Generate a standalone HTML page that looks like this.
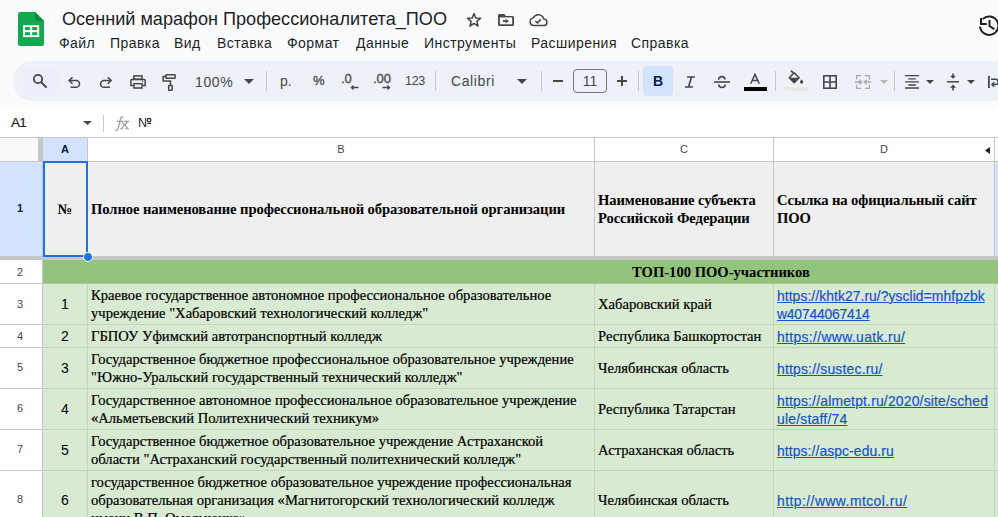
<!DOCTYPE html>
<html><head><meta charset="utf-8">
<style>
*{margin:0;padding:0;box-sizing:border-box}
html,body{width:998px;height:517px;overflow:hidden;background:#fff;font-family:"Liberation Sans",sans-serif;position:relative}
.a{position:absolute}
#hdr{left:0;top:0;width:998px;height:108px;background:#f9fbfd}
#title{left:62px;top:9px;font-size:18.1px;color:#1f1f1f;white-space:nowrap}
.menu{top:34.5px;font-size:14px;letter-spacing:0.45px;color:#1f1f1f;white-space:nowrap}
#pill{left:13px;top:61px;width:1000px;height:40px;background:#eef2f8;border-radius:20px}
.tb{position:absolute;font-size:14px;color:#444746;white-space:nowrap;line-height:16px}
.sep{position:absolute;width:1px;height:20px;background:#c7c7c7;top:71px}
.ic{position:absolute;overflow:visible}
#fbar{left:0;top:108px;width:998px;height:30px;background:#fff;border-bottom:1px solid #c7c7c7}
.cell{position:absolute;font-family:"Liberation Serif",serif;font-size:14.6px;color:#000;line-height:18px;white-space:nowrap;-webkit-text-stroke:0.2px #000}
.b{font-weight:bold;-webkit-text-stroke:0}
.num{position:absolute;font-family:"Liberation Sans",sans-serif;font-size:14px;color:#000;line-height:16px;text-align:center;width:44px;left:43px}
.lnk{position:absolute;font-family:"Liberation Sans",sans-serif;font-size:13.9px;color:#1155cc;line-height:17.6px;text-decoration:underline;-webkit-text-stroke:0.2px #1155cc;white-space:nowrap;left:777px}
.rh{position:absolute;left:-1px;width:42px;text-align:center;font-size:11px;color:#444746;line-height:12px}
.ch{position:absolute;top:143px;font-size:11px;color:#444746;line-height:12px;text-align:center}
.hl{position:absolute;height:1px}
.vl{position:absolute;width:1px}
</style></head><body>
<div id="hdr" class="a"></div>
<!-- logo -->
<svg class="a" style="left:18px;top:12px" width="26" height="34" viewBox="0 0 26 34">
<path d="M2 0h15l9 9v23a2 2 0 0 1-2 2H2a2 2 0 0 1-2-2V2a2 2 0 0 1 2-2z" fill="#11a84f"/>
<path d="M17 0l9 9h-7a2 2 0 0 1-2-2z" fill="#0b8a3c"/>
<rect x="5" y="13.2" width="16.2" height="11.9" fill="#fff"/>
<rect x="7" y="15.1" width="5" height="3" fill="#11a84f"/><rect x="14.2" y="15.1" width="5" height="3" fill="#11a84f"/>
<rect x="7" y="20.2" width="5" height="3" fill="#11a84f"/><rect x="14.2" y="20.2" width="5" height="3" fill="#11a84f"/>
</svg>
<div id="title" class="a">Осенний марафон Профессионалитета_ПОО</div>
<!-- star -->
<svg class="ic" style="left:466px;top:12px" width="16" height="16" viewBox="0 0 16 16"><path d="M8 1.6l1.75 4.45 4.75.3-3.67 3.03 1.2 4.62L8 11.4 3.97 14l1.2-4.62L1.5 6.35l4.75-.3z" fill="none" stroke="#444746" stroke-width="1.5" stroke-linejoin="round"/></svg>
<!-- folder move -->
<svg class="ic" style="left:498px;top:14px" width="16" height="12" viewBox="0 0 16 12"><path d="M1.5 0H6.3L8 2h6.5A1.5 1.5 0 0 1 16 3.5v7A1.5 1.5 0 0 1 14.5 12h-13A1.5 1.5 0 0 1 0 10.5v-9A1.5 1.5 0 0 1 1.5 0z" fill="#444746"/><rect x="1.8" y="3.4" width="12.4" height="6.9" fill="#f9fbfd"/><rect x="5" y="6.1" width="2.7" height="1.9" fill="#444746"/><path d="M7.6 4.7L10.9 7 7.6 9.4z" fill="#444746"/></svg>
<!-- cloud check -->
<svg class="ic" style="left:528.5px;top:13.2px" width="18.6" height="14" viewBox="0 0 20 15"><path d="M5 13.5h10.5a3.6 3.6 0 0 0 .3-7.2A6 6 0 0 0 4.6 5.2 4.2 4.2 0 0 0 5 13.5z" fill="none" stroke="#444746" stroke-width="1.6" stroke-linejoin="round"/><path d="M7 8.6l2 2 3.8-3.8" fill="none" stroke="#444746" stroke-width="1.6"/></svg>
<!-- history -->
<svg class="ic" style="left:978px;top:15px" width="22" height="22" viewBox="0 0 22 22"><path d="M2 11.6A9.2 9.2 0 1 0 4.7 4.1" fill="none" stroke="#1f1f1f" stroke-width="2"/><path d="M3 3v6h5.8" fill="none" stroke="#1f1f1f" stroke-width="2"/><path d="M11.5 5v6l4.8 3.2" fill="none" stroke="#1f1f1f" stroke-width="2"/></svg>

<div class="a menu" style="left:59px">Файл</div>
<div class="a menu" style="left:110px">Правка</div>
<div class="a menu" style="left:174px">Вид</div>
<div class="a menu" style="left:217px">Вставка</div>
<div class="a menu" style="left:287px">Формат</div>
<div class="a menu" style="left:356px">Данные</div>
<div class="a menu" style="left:424px">Инструменты</div>
<div class="a menu" style="left:531px">Расширения</div>
<div class="a menu" style="left:631px">Справка</div>

<div id="pill" class="a"></div>
<div class="a" style="left:22px;top:67px;width:37px;height:28px;background:#eaeff9"></div>
<!-- search -->
<svg class="ic" style="left:31px;top:72px" width="18" height="18" viewBox="0 0 18 18"><circle cx="7" cy="7" r="4.2" fill="none" stroke="#444746" stroke-width="1.8"/><path d="M10 10l5.6 5.6" stroke="#444746" stroke-width="1.9"/></svg>
<!-- undo -->
<svg class="ic" style="left:68px;top:76px" width="14" height="13" viewBox="0 0 14 13"><path d="M1.5 4.5h6.6a3.4 3.4 0 0 1 0 6.8H2.6" fill="none" stroke="#444746" stroke-width="1.6"/><path d="M4.5 1.2L1.2 4.5l3.3 3.3" fill="none" stroke="#444746" stroke-width="1.6"/></svg>
<!-- redo -->
<svg class="ic" style="left:99px;top:76px" width="14" height="13" viewBox="0 0 14 13"><path d="M11.8 4.5H5a3.4 3.4 0 0 0 0 6.8h6" fill="none" stroke="#444746" stroke-width="1.6"/><path d="M8.8 1.2l3.3 3.3-3.3 3.3" fill="none" stroke="#444746" stroke-width="1.6"/></svg>
<!-- print -->
<svg class="ic" style="left:130px;top:75px" width="17" height="15" viewBox="0 0 17 15"><rect x="3.9" y=".9" width="8.1" height="3.4" fill="none" stroke="#444746" stroke-width="1.5"/><path d="M3.2 10.4H.9V5.4a1 1 0 0 1 1-1h12.3a1 1 0 0 1 1 1v5H12.7" fill="none" stroke="#444746" stroke-width="1.5"/><rect x="3.9" y="8.7" width="8.1" height="4.3" fill="none" stroke="#444746" stroke-width="1.5"/><circle cx="12.5" cy="6.3" r=".7" fill="#444746"/></svg>
<!-- paint format -->
<svg class="ic" style="left:161px;top:73px" width="16" height="19" viewBox="0 0 16 19"><rect x="4.95" y="1.75" width="9.2" height="3.5" rx=".6" fill="none" stroke="#444746" stroke-width="1.5"/><path d="M4.95 3.5H2.15v4.45h7.3V12.6" fill="none" stroke="#444746" stroke-width="1.5"/><rect x="7.7" y="12.6" width="3.5" height="4.6" rx=".5" fill="none" stroke="#444746" stroke-width="1.5"/></svg>
<div class="tb" style="left:195px;top:74px;letter-spacing:0.6px">100%</div>
<svg class="ic" style="left:244px;top:79px" width="10" height="5" viewBox="0 0 10 5"><path d="M0 0h10L5 5z" fill="#444746"/></svg>
<div class="sep" style="left:266px"></div>
<div class="tb" style="left:280px;top:73px">р.</div>
<div class="tb" style="left:313px;top:73px;font-size:13px;-webkit-text-stroke:0.3px #444746">%</div>
<div class="tb" style="left:341px;top:71px;font-size:13px;-webkit-text-stroke:0.3px #444746">.0</div>
<svg class="ic" style="left:350px;top:85px" width="9" height="5" viewBox="0 0 9 5"><path d="M8.5 2.5H1.5M3.5 .5l-2 2 2 2" fill="none" stroke="#444746" stroke-width="1.4"/></svg>
<div class="tb" style="left:373px;top:71px;font-size:13px;-webkit-text-stroke:0.3px #444746">.00</div>
<svg class="ic" style="left:382px;top:85px" width="9" height="5" viewBox="0 0 9 5"><path d="M.5 2.5h7M5.5 .5l2 2-2 2" fill="none" stroke="#444746" stroke-width="1.4"/></svg>
<div class="tb" style="left:405px;top:73px;font-size:12.5px;letter-spacing:-0.3px">123</div>
<div class="sep" style="left:435px"></div>
<div class="tb" style="left:451px;top:73px;letter-spacing:0.6px">Calibri</div>
<svg class="ic" style="left:517px;top:79px" width="10" height="5" viewBox="0 0 10 5"><path d="M0 0h10L5 5z" fill="#444746"/></svg>
<div class="sep" style="left:541px"></div>
<div class="a" style="left:553px;top:80px;width:10px;height:2px;background:#444746"></div>
<div class="a" style="left:573px;top:69px;width:34px;height:24px;border:1px solid #747775;border-radius:4px"></div>
<div class="tb" style="left:573px;top:73px;width:34px;text-align:center">11</div>
<div class="a" style="left:617px;top:80px;width:10px;height:2px;background:#444746"></div>
<div class="a" style="left:621px;top:76px;width:2px;height:10px;background:#444746"></div>
<div class="sep" style="left:638px"></div>
<div class="a" style="left:643px;top:66px;width:30px;height:30px;background:#d3e3fd;border-radius:4px"></div>
<div class="tb" style="left:643px;top:73px;width:30px;text-align:center;font-weight:bold;color:#041e49;font-size:14px">B</div>
<svg class="ic" style="left:684px;top:76px" width="12" height="12" viewBox="0 0 12 12"><path d="M3 1h8M1 11h8M7.5 1l-3 10" fill="none" stroke="#444746" stroke-width="1.7"/></svg>
<svg class="ic" style="left:714px;top:76px" width="16" height="12" viewBox="0 0 16 12"><path d="M0 6h16" stroke="#444746" stroke-width="1.6"/><path d="M4.6 3.8A3.2 3 0 0 1 11 3.5M4.8 8.5a3.2 3 0 0 0 6.4 0" fill="none" stroke="#444746" stroke-width="1.6"/></svg>
<svg class="ic" style="left:750px;top:74px" width="10" height="10" viewBox="0 0 10 10"><path d="M.7 9.8L5 .4l4.3 9.4M2.2 6.6h5.6" fill="none" stroke="#444746" stroke-width="1.5"/></svg>
<div class="a" style="left:744px;top:87px;width:23px;height:4px;background:#000"></div>
<div class="sep" style="left:775px"></div>
<svg class="ic" style="left:788px;top:70px" width="16" height="15" viewBox="0 0 16 15"><path d="M3 .6l2.3 2.3" stroke="#444746" stroke-width="1.6"/><path d="M1.3 7.7L6.2 2.8l4.9 4.9-4.9 4.9z" fill="none" stroke="#444746" stroke-width="1.6" stroke-linejoin="round"/><path d="M1.3 7.7h9.8l-4.9 4.9z" fill="#444746"/><path d="M13.6 9.3c1 1.3 1.6 2.1 1.6 2.8a1.6 1.6 0 0 1-3.2 0c0-.7.6-1.5 1.6-2.8z" fill="#444746"/></svg>
<div class="a" style="left:785px;top:87px;width:23px;height:4px;background:#e8e8e8"></div>
<svg class="ic" style="left:823px;top:75px" width="14" height="14" viewBox="0 0 14 14"><rect x=".8" y=".8" width="12.4" height="12.4" fill="none" stroke="#444746" stroke-width="1.6"/><path d="M7 .8v12.4M.8 7h12.4" stroke="#444746" stroke-width="1.6"/></svg>
<svg class="ic" style="left:855px;top:75px" width="16" height="14" viewBox="0 0 16 14"><path d="M1.6 4.6V.7H6M1.6 9.4v3.9H6M14.4 4.6V.7H10M14.4 9.4v3.9H10" fill="none" stroke="#a8abad" stroke-width="1.3"/><path d="M0 7h6.2M4.2 4.8L6.6 7 4.2 9.2M16 7H9.8M11.8 4.8L9.4 7l2.4 2.2" fill="none" stroke="#a8abad" stroke-width="1.5"/></svg>
<svg class="ic" style="left:880px;top:80px" width="8" height="4" viewBox="0 0 8 4"><path d="M0 0h8L4 4z" fill="#b6b8ba"/></svg>
<div class="sep" style="left:894px"></div>
<svg class="ic" style="left:905px;top:75px" width="14" height="14" viewBox="0 0 14 14"><path d="M0 .7h14M3.3 3.8h7.5M0 6.8h14M3.3 10h7.5M0 13h14" stroke="#444746" stroke-width="1.3"/></svg>
<svg class="ic" style="left:926px;top:80px" width="8" height="4" viewBox="0 0 8 4"><path d="M0 0h8L4 4z" fill="#444746"/></svg>
<svg class="ic" style="left:947px;top:73px" width="12" height="18" viewBox="0 0 12 18"><path d="M0 8.8h12" stroke="#444746" stroke-width="1.5"/><path d="M6 .5v3M6 14v3.5" stroke="#444746" stroke-width="1.6"/><path d="M3 2.8h6L6 5.8zM3 14.8h6L6 11.6z" fill="#444746"/></svg>
<svg class="ic" style="left:967px;top:80px" width="8" height="4" viewBox="0 0 8 4"><path d="M0 0h8L4 4z" fill="#444746"/></svg>
<svg class="ic" style="left:987px;top:75px" width="14" height="14" viewBox="0 0 14 14"><path d="M1.9 1v12" stroke="#444746" stroke-width="1.8"/><path d="M4 4.3h4.6a2.6 2.6 0 0 1 0 5.2H5.2" fill="none" stroke="#444746" stroke-width="1.6"/><path d="M7.2 7.3L5 9.5l2.2 2.2" fill="none" stroke="#444746" stroke-width="1.6"/></svg>

<div id="fbar" class="a"></div>
<div class="a" style="left:11px;top:114.5px;font-size:13.5px;line-height:15px;color:#1f1f1f;letter-spacing:-0.8px;-webkit-text-stroke:0.2px #1f1f1f">A1</div>
<svg class="ic" style="left:83px;top:121px" width="9" height="4" viewBox="0 0 9 4"><path d="M0 0h9L4.5 4z" fill="#444746"/></svg>
<div class="a" style="left:103px;top:115px;width:1px;height:17px;background:#c7c7c7"></div>
<svg class="ic" style="left:114px;top:116px" width="16" height="16" viewBox="0 0 16 16"><path d="M9.3 1.4C8.3.7 7 1 6.6 2.3L4.1 12.8C3.8 14.1 2.8 14.8 1.2 14" fill="none" stroke="#9aa0a6" stroke-width="1.3"/><path d="M3 5.4h6M10 5.4h5M6.2 12.7h3M11 12.7h4" stroke="#9aa0a6" stroke-width="1.1"/><path d="M7.4 5.4l6.6 7.3M14 5.4l-6.6 7.3" stroke="#9aa0a6" stroke-width="1.2"/></svg>
<div class="a" style="left:138px;top:115.5px;font-size:12.6px;line-height:15px;color:#1f1f1f">N</div><svg class="ic" style="left:146px;top:117px" width="6" height="8" viewBox="0 0 6 8"><circle cx="3.1" cy="3.1" r="1.8" fill="none" stroke="#1f1f1f" stroke-width="1.2"/><path d="M1.2 6.4h3.8" stroke="#1f1f1f" stroke-width="1.1"/></svg>

<!-- ============ GRID ============ -->
<!-- column header row -->
<div class="a" style="left:0;top:138px;width:38px;height:23px;background:#f8f9fa"></div>
<div class="a" style="left:38px;top:138px;width:5px;height:23px;background:#c7c7c7"></div>
<div class="a" style="left:43px;top:138px;width:44px;height:23px;background:#d3e3fd"></div>
<div class="hl" style="left:0;top:161px;width:998px;background:#c7c7c7"></div>
<div class="vl" style="left:87px;top:138px;height:23px;background:#c7c7c7"></div>
<div class="vl" style="left:594px;top:138px;height:23px;background:#c7c7c7"></div>
<div class="vl" style="left:773px;top:138px;height:23px;background:#c7c7c7"></div>
<div class="vl" style="left:994px;top:138px;height:23px;background:#c7c7c7"></div>
<div class="ch" style="left:43px;width:44px;font-weight:bold;color:#041e49">A</div>
<div class="ch" style="left:88px;width:506px">B</div>
<div class="ch" style="left:595px;width:178px">C</div>
<div class="ch" style="left:774px;width:220px">D</div>
<svg class="ic" style="left:985px;top:147px" width="5" height="7" viewBox="0 0 5 7"><path d="M5 0v7L0 3.5z" fill="#1f1f1f"/></svg>

<!-- row 1 -->
<div class="a" style="left:0;top:162px;width:43px;height:94px;background:#d3e3fd"></div>
<div class="a" style="left:43px;top:162px;width:955px;height:94px;background:#efefef"></div>
<div class="a" style="left:995px;top:162px;width:3px;height:94px;background:#d3e3fd"></div>
<div class="vl" style="left:42px;top:162px;height:94px;background:#c7c7c7"></div>
<div class="vl" style="left:594px;top:162px;height:94px;background:#c7c7c7"></div>
<div class="vl" style="left:773px;top:162px;height:94px;background:#c7c7c7"></div>
<div class="vl" style="left:994px;top:162px;height:94px;background:#c7c7c7"></div>
<div class="rh" style="top:202px;font-weight:bold;color:#041e49">1</div>
<div class="cell b" style="left:43px;top:200px;width:44px;text-align:center">№</div>
<div class="cell b" style="left:91px;top:200px;letter-spacing:-0.07px">Полное наименование профессиональной образовательной организации</div>
<div class="cell b" style="left:598px;top:191px;letter-spacing:-0.07px">Наименование субъекта<br>Российской Федерации</div>
<div class="cell b" style="left:777px;top:191px;letter-spacing:-0.12px">Ссылка на официальный сайт<br>ПОО</div>

<!-- freeze bar -->
<div class="a" style="left:0;top:256px;width:998px;height:4px;background:#c7c7c7"></div>

<!-- row header column rows 2+ -->
<div class="a" style="left:0;top:260px;width:42px;height:257px;background:#fff"></div>
<div class="vl" style="left:42px;top:260px;height:257px;background:#c7c7c7"></div>
<!-- row 2 -->
<div class="a" style="left:43px;top:260px;width:955px;height:23px;background:#93c47d"></div>
<div class="cell b" style="left:632px;top:263px">ТОП-100 ПОО-участников</div>
<!-- rows 3+ bg -->
<div class="a" style="left:43px;top:284px;width:955px;height:233px;background:#d9ead3"></div>
<!-- horizontal lines -->
<div class="hl" style="left:0;top:283px;width:42px;background:#c7c7c7"></div>
<div class="hl" style="left:43px;top:283px;width:955px;background:#a9c99b"></div>
<div class="hl" style="left:0;top:324px;width:42px;background:#c7c7c7"></div>
<div class="hl" style="left:43px;top:324px;width:955px;background:#c3d3bd"></div>
<div class="hl" style="left:0;top:347px;width:42px;background:#c7c7c7"></div>
<div class="hl" style="left:43px;top:347px;width:955px;background:#c3d3bd"></div>
<div class="hl" style="left:0;top:388px;width:42px;background:#c7c7c7"></div>
<div class="hl" style="left:43px;top:388px;width:955px;background:#c3d3bd"></div>
<div class="hl" style="left:0;top:429px;width:42px;background:#c7c7c7"></div>
<div class="hl" style="left:43px;top:429px;width:955px;background:#c3d3bd"></div>
<div class="hl" style="left:0;top:470px;width:42px;background:#c7c7c7"></div>
<div class="hl" style="left:43px;top:470px;width:955px;background:#c3d3bd"></div>
<!-- vertical lines rows 3+ -->
<div class="vl" style="left:87px;top:284px;height:233px;background:#c3d3bd"></div>
<div class="vl" style="left:594px;top:284px;height:233px;background:#c3d3bd"></div>
<div class="vl" style="left:773px;top:284px;height:233px;background:#c3d3bd"></div>
<div class="vl" style="left:994px;top:284px;height:233px;background:#c3d3bd"></div>

<!-- row numbers -->
<div class="rh" style="top:266px">2</div>
<div class="rh" style="top:298px">3</div>
<div class="rh" style="top:330px">4</div>
<div class="rh" style="top:361px">5</div>
<div class="rh" style="top:402px">6</div>
<div class="rh" style="top:443px">7</div>
<div class="rh" style="top:493px">8</div>

<!-- row 3 -->
<div class="num" style="top:296px">1</div>
<div class="cell" style="left:91px;top:286px">Краевое государственное автономное профессиональное образовательное<br>учреждение "Хабаровский технологический колледж"</div>
<div class="cell" style="left:598px;top:295px">Хабаровский край</div>
<div class="lnk" style="top:288px"><span style="letter-spacing:0.06px">https://khtk27.ru/?ysclid=mhfpzbk</span><br><span style="letter-spacing:-0.2px">w40744067414</span></div>
<!-- row 4 -->
<div class="num" style="top:328px">2</div>
<div class="cell" style="left:91px;top:327px">ГБПОУ Уфимский автотранспортный колледж</div>
<div class="cell" style="left:598px;top:327px">Республика Башкортостан</div>
<div class="lnk" style="top:329px;letter-spacing:0.35px">https://www.uatk.ru/</div>
<!-- row 5 -->
<div class="num" style="top:360px">3</div>
<div class="cell" style="left:91px;top:350px">Государственное бюджетное профессиональное образовательное учреждение<br>"Южно-Уральский государственный технический колледж"</div>
<div class="cell" style="left:598px;top:359px">Челябинская область</div>
<div class="lnk" style="top:361px;letter-spacing:0.2px">https://sustec.ru/</div>
<!-- row 6 -->
<div class="num" style="top:401px">4</div>
<div class="cell" style="left:91px;top:391px">Государственное автономное профессиональное образовательное учреждение<br>«Альметьевский Политехнический техникум»</div>
<div class="cell" style="left:598px;top:400px">Республика Татарстан</div>
<div class="lnk" style="top:393px"><span style="letter-spacing:0.19px">https://almetpt.ru/2020/site/sched</span><br><span style="letter-spacing:0.23px">ule/staff/74</span></div>
<!-- row 7 -->
<div class="num" style="top:442px">5</div>
<div class="cell" style="left:91px;top:432px">Государственное бюджетное образовательное учреждение Астраханской<br>области "Астраханский государственный политехнический колледж"</div>
<div class="cell" style="left:598px;top:441px">Астраханская область</div>
<div class="lnk" style="top:443px;letter-spacing:0.09px">https://aspc-edu.ru</div>
<!-- row 8 -->
<div class="num" style="top:492px">6</div>
<div class="cell" style="left:91px;top:473px">государственное бюджетное образовательное учреждение профессиональная<br>образовательная организация «Магнитогорский технологический колледж<br>имени В.П. Омельченко»</div>
<div class="cell" style="left:598px;top:491px">Челябинская область</div>
<div class="lnk" style="top:493px;letter-spacing:0.45px">http://www.mtcol.ru/</div>

<!-- selection -->
<div class="a" style="left:43px;top:161px;width:45px;height:96px;border:2px solid #1a73e8"></div>
<div class="a" style="left:83px;top:252px;width:10px;height:10px;border-radius:50%;background:#1a73e8;border:1px solid #fff"></div>
</body></html>
